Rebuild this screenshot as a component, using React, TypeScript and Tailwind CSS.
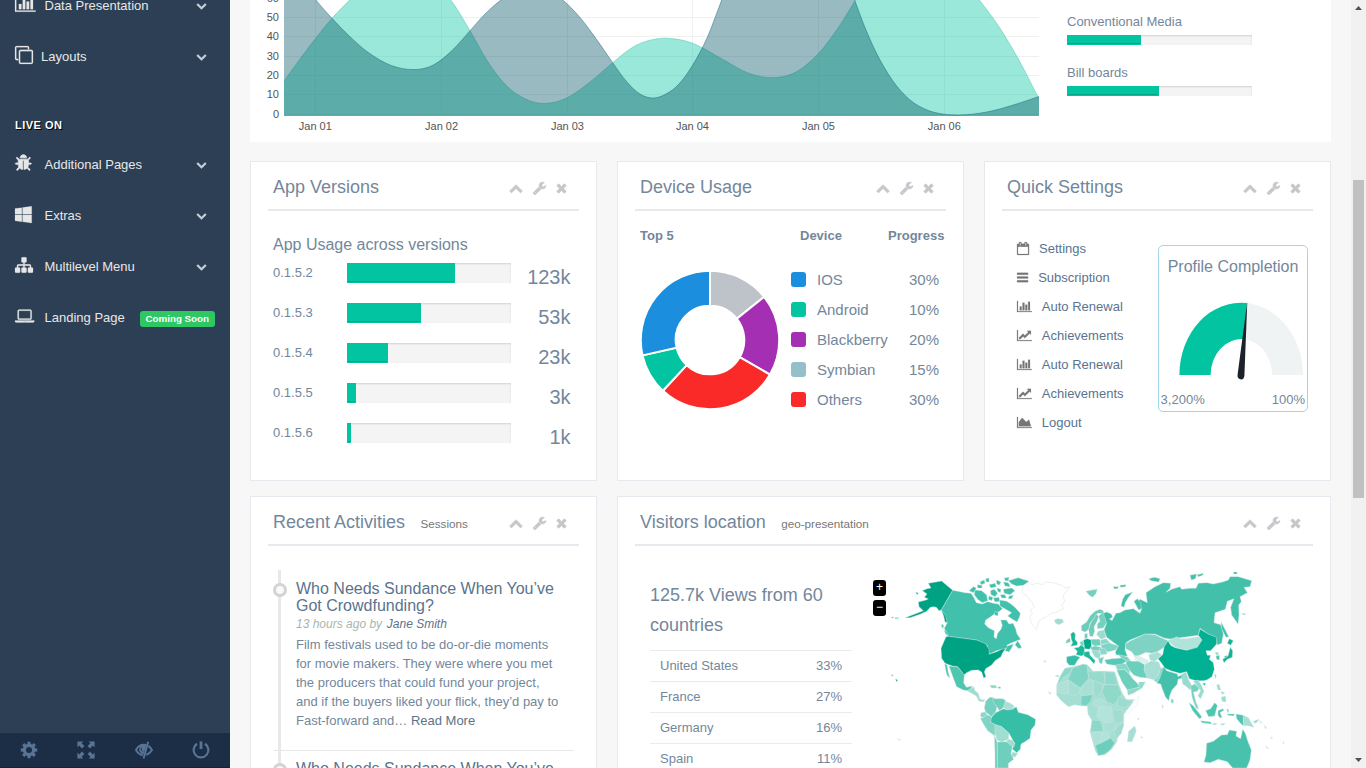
import React from "react";

const glyphs = {
  chevronDown:
    "M1683 808l-742 741q-19 19-45 19t-45-19l-742-741q-19-19-19-45.5t19-45.5l166-165q19-19 45-19t45 19l531 531 531-531q19-19 45-19t45 19l166 165q19 19 19 45.5t-19 45.5z",
  chevronUp:
    "M1683 1331l-166 165q-19 19-45 19t-45-19l-531-531-531 531q-19 19-45 19t-45-19l-166-165q-19-19-19-45.5t19-45.5l742-741q19-19 45-19t45 19l742 741q19 19 19 45.5t-19 45.5z",
  wrench:
    "M448 1472q0-26-19-45t-45-19-45 19-19 45 19 45 45 19 45-19 19-45zm644-420l-682 682q-37 37-90 37-52 0-91-37l-106-108q-38-36-38-90 0-53 38-91l681-681q39 98 114.5 173.5t173.5 114.5zm634-435q0 39-23 106-47 134-164.5 217.5t-258.5 83.5q-185 0-316.5-131.5t-131.5-316.5 131.5-316.5 316.5-131.5q58 0 121.5 16.5t107.5 46.5q16 11 16 28t-16 28l-293 169v224l193 107q5-3 79-48.5t135.5-81 70.5-35.5q15 0 23.5 10t8.5 25z",
  close:
    "M1490 1322q0 40-28 68l-136 136q-28 28-68 28t-68-28l-294-294-294 294q-28 28-68 28t-68-28l-136-136q-28-28-28-68t28-68l294-294-294-294q-28-28-28-68t28-68l136-136q28-28 68-28t68 28l294 294 294-294q28-28 68-28t68 28l136 136q28 28 28 68t-28 68l-294 294 294 294q28 28 28 68z",
  barChart:
    "M640 896v512h-256v-512h256zm384-512v1024h-256v-1024h256zm1024 1152v128h-2048v-1536h128v1408h1920zm-640-896v768h-256v-768h256zm384-384v1152h-256v-1152h256z",
  lineChart:
    "M2048 1536v128h-2048v-1536h128v1408h1920zm-128-1248v435q0 21-19.5 29.5t-35.5-7.5l-121-121-633 633q-10 10-23 10t-23-10l-233-233-416 416-192-192 585-585q10-10 23-10t23 10l233 233 464-464-121-121q-16-16-7.5-35.5t29.5-19.5h435q14 0 23 9t9 23z",
  areaChart:
    "M2048 1536v128h-2048v-1536h128v1408h1920zm-384-1024l256 896h-1664v-576l448-576 576 576z",
  calendar:
    "M192 1664h1408v-1024h-1408v1024zm384-1216v-288q0-14-9-23t-23-9h-64q-14 0-23 9t-9 23v288q0 14 9 23t23 9h64q14 0 23-9t9-23zm768 0v-288q0-14-9-23t-23-9h-64q-14 0-23 9t-9 23v288q0 14 9 23t23 9h64q14 0 23-9t9-23zm384-64v1280q0 52-38 90t-90 38h-1408q-52 0-90-38t-38-90v-1280q0-52 38-90t90-38h128v-96q0-66 47-113t113-47h64q66 0 113 47t47 113v96h384v-96q0-66 47-113t113-47h64q66 0 113 47t47 113v96h128q52 0 90 38t38 90z",
  bars: "M1664 1344v128q0 26-19 45t-45 19h-1408q-26 0-45-19t-19-45v-128q0-26 19-45t45-19h1408q26 0 45 19t19 45zm0-512v128q0 26-19 45t-45 19h-1408q-26 0-45-19t-19-45v-128q0-26 19-45t45-19h1408q26 0 45 19t19 45zm0-512v128q0 26-19 45t-45 19h-1408q-26 0-45-19t-19-45v-128q0-26 19-45t45-19h1408q26 0 45 19t19 45z",
  windows:
    "M746 1006v651l-682-94v-557h682zm0-743v659h-682v-565zm982 743v786l-907-125v-661h907zm0-878v794h-907v-669z",
  sitemap:
    "M1792 1248v320q0 40-28 68t-68 28h-320q-40 0-68-28t-28-68v-320q0-40 28-68t68-28h96v-192h-512v192h96q40 0 68 28t28 68v320q0 40-28 68t-68 28h-320q-40 0-68-28t-28-68v-320q0-40 28-68t68-28h96v-192h-512v192h96q40 0 68 28t28 68v320q0 40-28 68t-68 28h-320q-40 0-68-28t-28-68v-320q0-40 28-68t68-28h96v-192q0-52 38-90t90-38h512v-192h-96q-40 0-68-28t-28-68v-320q0-40 28-68t68-28h320q40 0 68 28t28 68v320q0 40-28 68t-68 28h-96v192h512q52 0 90 38t38 90v192h96q40 0 68 28t28 68z",
  laptop:
    "M416 1280q-66 0-113-47t-47-113v-704q0-66 47-113t113-47h1088q66 0 113 47t47 113v704q0 66-47 113t-113 47h-1088zm-32-864v704q0 13 9.5 22.5t22.5 9.5h1088q13 0 22.5-9.5t9.5-22.5v-704q0-13-9.5-22.5t-22.5-9.5h-1088q-13 0-22.5 9.5t-9.5 22.5zm1376 928h160v96q0 40-47 68t-113 28h-1600q-66 0-113-28t-47-68v-96h1760zm-720 96q16 0 16-16t-16-16h-160q-16 0-16 16t16 16h160z",
  clone:
    "M1664 1632v-1088q0-13-9.5-22.5t-22.5-9.5h-1088q-13 0-22.5 9.5t-9.5 22.5v1088q0 13 9.5 22.5t22.5 9.5h1088q13 0 22.5-9.5t9.5-22.5zm128-1088v1088q0 66-47 113t-113 47h-1088q-66 0-113-47t-47-113v-1088q0-66 47-113t113-47h1088q66 0 113 47t47 113zm-384-384v160h-128v-160q0-13-9.5-22.5t-22.5-9.5h-1088q-13 0-22.5 9.5t-9.5 22.5v1088q0 13 9.5 22.5t22.5 9.5h160v128h-160q-66 0-113-47t-47-113v-1088q0-66 47-113t113-47h1088q66 0 113 47t47 113z",
  bug: "M1696 960q0 26-19 45t-45 19h-224q0 171-67 290l208 209q19 19 19 45t-19 45q-18 19-45 19t-45-19l-198-197q-5 5-15 13t-42 28.5-65 36.5-82 29-97 13v-896h-128v896q-51 0-101.5-13.5t-87-33-66-39-43.5-32.5l-15-14-183 207q-20 21-48 21-24 0-43-16-19-18-20.5-44.5t15.5-46.5l202-227q-58-114-58-274h-224q-26 0-45-19t-19-45 19-45 45-19h224v-294l-173-173q-19-19-19-45t19-45 45-19 45 19l173 173h844l173-173q19-19 45-19t45 19 19 45-19 45l-173 173v294h224q26 0 45 19t19 45zm-480-576h-640q0-133 93.5-226.5t226.5-93.5 226.5 93.5 93.5 226.5z",
};

type GlyphName = keyof typeof glyphs;

/* x offset and advance width of each glyph on its 1792-unit em */
const metrics: Record<GlyphName, [number, number]> = {
  chevronDown: [0, 1792],
  chevronUp: [0, 1792],
  wrench: [64, 1664],
  close: [192, 1408],
  barChart: [0, 2048],
  lineChart: [0, 2048],
  areaChart: [0, 2048],
  calendar: [64, 1664],
  bars: [128, 1536],
  windows: [64, 1664],
  sitemap: [0, 1792],
  laptop: [0, 1920],
  clone: [0, 1792],
  bug: [64, 1664],
};

function Glyph({ name, size, weight = 0, className = "" }: { name: GlyphName; size: number; weight?: number; className?: string }) {
  const [x, w] = metrics[name];
  return (
    <svg
      className={"shrink-0 fill-current stroke-current overflow-visible " + className}
      width={(w / 1792) * size}
      height={size}
      viewBox={`${x} 0 ${w} 1792`}
      strokeWidth={weight}
    >
      <path d={glyphs[name]} />
    </svg>
  );
}

/* ---------- sidebar ---------- */

function NavRow({ icon, label, badge, iconBox = "w-[29.5px]" }: { icon: GlyphName; label: string; badge?: string; iconBox?: string }) {
  return (
    <div className="flex h-[51px] items-center pl-[15px] pr-[23px]">
      <span className={"flex shrink-0 -translate-y-[2px] " + iconBox}>
        <Glyph name={icon} size={18} weight={icon === "bug" ? 70 : 20} />
      </span>
      <span>{label}</span>
      {badge ? (
        <span className="ml-[15px] mt-[3px] h-4 w-[75px] shrink-0 -mr-[20px] rounded-[3px] bg-[#2dc764] text-center text-[9.75px] leading-4 font-bold text-white">
          {badge}
        </span>
      ) : (
        <Glyph name="chevronDown" size={11} className="ml-auto -mt-px text-[#c4cfda]" />
      )}
    </div>
  );
}

function FooterIcon({ children }: { children: React.ReactNode }) {
  return (
    <span className="flex flex-1 justify-center">
      <svg width="18" height="18" viewBox="0 0 18 18" className="fill-current stroke-current">
        {children}
      </svg>
    </span>
  );
}

function Sidebar() {
  return (
    <aside className="flex h-full w-[230px] shrink-0 flex-col overflow-hidden bg-[#2d3f54] text-[13px] text-[#e7e7e7]">
      <nav className="-mt-5 flex-1">
        <NavRow icon="barChart" label="Data Presentation" />
        <NavRow icon="clone" label="Layouts" iconBox="w-[26px]" />
        <h3 className="h-[57px] pt-[35px] pl-[15px] text-[11px] leading-4 font-bold tracking-[0.5px] text-white uppercase [text-shadow:1px_1px_#000]">
          Live On
        </h3>
        <NavRow icon="bug" label="Additional Pages" />
        <NavRow icon="windows" label="Extras" />
        <NavRow icon="sitemap" label="Multilevel Menu" />
        <NavRow icon="laptop" label="Landing Page" badge="Coming Soon" />
      </nav>
      <div className="flex h-[35px] items-center border-b border-[#14233a] bg-[#1c2e46] text-[#5a7496]">
        <FooterIcon>
          <circle cx="9" cy="9" r="4.6" fill="none" strokeWidth="3.2" />
          {[0, 45, 90, 135, 180, 225, 270, 315].map((a) => (
            <rect key={a} x="7.4" y="0.8" width="3.2" height="3" stroke="none" transform={`rotate(${a} 9 9)`} />
          ))}
        </FooterIcon>
        <FooterIcon>
          {[0, 90, 180, 270].map((a) => (
            <path
              key={a}
              stroke="none"
              transform={`rotate(${a} 9 9)`}
              d="M0.4 0.4H6.4L4.6 2.2L7.4 5L5 7.4L2.2 4.6L0.4 6.4Z"
            />
          ))}
        </FooterIcon>
        <FooterIcon>
          <path fill="none" strokeWidth="1.9" d="M11.5 4.1Q4.2 2.6 1 9Q3.4 13.4 7.8 14.2" />
          <path stroke="none" d="M5 5Q8 3.4 11.4 4.4L8.4 13.4Q4 11.8 4.2 8.2Z" />
          <path fill="none" strokeWidth="1.9" d="M13.4 4.9Q15.6 6.4 17 9Q14.9 12.6 11.2 13.8" />
          <path fill="none" strokeWidth="1.9" d="M13.2 0.8L8.6 17.4" />
          <path fill="none" stroke="#1c2e46" strokeWidth="0.9" d="M6.2 6.6Q5.6 9.4 7.9 10.6" />
        </FooterIcon>
        <FooterIcon>
          <path fill="none" strokeWidth="2.2" d="M5 2.8A7.4 7.4 0 1 0 13 2.8" />
          <path fill="none" strokeWidth="2.8" d="M9 0.4V8" />
        </FooterIcon>
      </div>
    </aside>
  );
}

/* ---------- area chart ---------- */

type Pt = [number, number];

/* cubic Hermite curve through the points, slopes by central difference */
function spline(pts: Pt[]) {
  const last = pts.length - 1;
  const slope = (i: number) => {
    const a = pts[Math.max(i - 1, 0)];
    const b = pts[Math.min(i + 1, last)];
    return (b[1] - a[1]) / (b[0] - a[0]);
  };
  let d = `M${pts[0][0]} ${pts[0][1]}`;
  for (let i = 0; i < last; i++) {
    const [x0, y0] = pts[i];
    const [x1, y1] = pts[i + 1];
    const h = (x1 - x0) / 3;
    d += `C${x0 + h} ${y0 + slope(i) * h} ${x1 - h} ${y1 - slope(i + 1) * h} ${x1} ${y1}`;
  }
  return d;
}

const seriesA: Pt[] = [
  [284, 81], [300, 59], [315.5, 38.5], [332, 18.3], [352, -2], [375, -20], [402, -28], [430, -20], [450, -1], [470, 30.7],
  [488, 62], [506.7, 86], [526.7, 99.6], [545, 103.5], [566.7, 98], [590, 82], [612.7, 62.7], [633, 47],
  [650, 40.2], [668, 38.3], [692.7, 43.2], [723, 59.5], [748, 73], [773, 77.7], [796, 72], [818.7, 53.3],
  [838, 28], [855, 1], [875, -30], [915, -60], [950, -35], [979.3, 0], [1000, 28.3], [1020, 62], [1039, 99],
];

const seriesB: Pt[] = [
  [284, -50], [300, -22], [316, 0], [332, 18.3], [350, 36.7], [369, 53], [391, 65.4], [414, 69.6], [433, 65.2],
  [452, 50.6], [470, 30.7], [485, 14], [501, 0], [516, -9], [532, -13], [548, -9], [562.7, 0], [580, 17.5], [597, 40],
  [612.7, 62.7], [626.7, 81.7], [640, 94], [653.3, 98], [666, 94], [679, 84], [692.7, 65],
  [707, 38], [721.7, 0], [745, -60], [790, -110], [830, -65], [855, 1], [866, 30], [880, 60], [896.7, 86],
  [914, 103], [934, 112.3], [958, 115], [986.7, 112], [1013.3, 105], [1039, 96.5],
];

const close = (d: string) => d + "L1039 116L284 116Z";

const dayX = [315.3, 441.6, 567.4, 692.4, 818.4, 944.3];

function AreaChart() {
  return (
    <svg width="817" height="142" viewBox="250 0 817 142" className="shrink-0">
      <g stroke="#f0f0f0">
        {[17.5, 36.5, 56.5, 75.5, 94.5, 114.5].map((y) => (
          <path key={y} d={`M284 ${y}H1039`} />
        ))}
        {[315.5, 441.5, 567.5, 692.5, 818.5, 944.5].map((x) => (
          <path key={x} d={`M${x} 0V115`} />
        ))}
      </g>
      <path d={close(spline(seriesA))} fill="rgba(3,198,160,0.4)" />
      <path d={spline(seriesA)} fill="none" stroke="rgba(38,185,154,0.38)" strokeWidth="1" />
      <path d={close(spline(seriesB))} fill="rgba(0,82,100,0.4)" />
      <path d={spline(seriesB)} fill="none" stroke="rgba(3,88,106,0.4)" strokeWidth="1" />
      <g fill="#545454" fontSize="11" textAnchor="end">
        {[60, 50, 40, 30, 20, 10, 0].map((v, i) => (
          <text key={v} x="279" y={Math.floor(2 + i * 19.35)}>
            {v}
          </text>
        ))}
      </g>
      <g fill="#545454" fontSize="11" textAnchor="middle">
        {["Jan 01", "Jan 02", "Jan 03", "Jan 04", "Jan 05", "Jan 06"].map((t, i) => (
          <text key={t} x={dayX[i]} y="130">
            {t}
          </text>
        ))}
      </g>
    </svg>
  );
}

function Progress({ value, className }: { value: number; className: string }) {
  return (
    <div className={"bg-[#f4f4f4] shadow-[inset_0_1px_2px_rgba(0,0,0,0.14)] " + className}>
      <div
        className="h-full border border-[#03c4a1] bg-[#03c4a1] shadow-[inset_0_-1px_0_rgba(0,0,0,0.15)]"
        style={{ width: `${value}%` }}
      />
    </div>
  );
}

/* ---------- panel ---------- */

function Panel({ title, note, className, children }: { title: string; note?: string; className: string; children: React.ReactNode }) {
  return (
    <section className={"shrink-0 border border-[#e6e9ed] bg-white px-[17px] " + className}>
      <header className="flex h-[49px] items-start border-b-2 border-[#e6e9ed] pl-[5px]">
        <h2 className="pt-[14px] text-[18px] leading-[22px]">
          {title}
          {note && <small className="ml-[15.4px] text-[11.7px] text-[#777]">{note}</small>}
        </h2>
        <div className="mt-[19px] mr-[12px] ml-auto flex text-[#c5c7cb]">
          <Glyph name="chevronUp" size={14} weight={60} />
          <Glyph name="wrench" size={14} weight={60} className="ml-[10px]" />
          <Glyph name="close" size={14} weight={60} className="ml-[10px]" />
        </div>
      </header>
      {children}
    </section>
  );
}

const versions = [
  { name: "0.1.5.2", pct: 66, count: "123k" },
  { name: "0.1.5.3", pct: 45, count: "53k" },
  { name: "0.1.5.4", pct: 25, count: "23k" },
  { name: "0.1.5.5", pct: 5.5, count: "3k" },
  { name: "0.1.5.6", pct: 2.5, count: "1k" },
];

function AppVersions() {
  return (
    <Panel title="App Versions" className="h-[320px] w-[347px]">
      <div className="pt-[23px] pl-[5px]">
        <h4 className="mb-[7px] text-[16px] leading-[22px]">App Usage across versions</h4>
        {versions.map((v) => (
          <div key={v.name} className="flex h-10 items-start">
            <span className="w-[74px] leading-5">{v.name}</span>
            <Progress value={v.pct} className="h-5 w-[164px]" />
            <span className="w-[59.5px] pt-[2px] text-right text-[20px] leading-6">{v.count}</span>
          </div>
        ))}
      </div>
    </Panel>
  );
}

const slices = [
  { v: 15, color: "#bdc3c9" },
  { v: 20, color: "#a52fb2" },
  { v: 30, color: "#f92a28" },
  { v: 10, color: "#03c4a1" },
  { v: 30, color: "#1b8fde" },
];

function Donut() {
  const R = 69.2;
  const r = 34.3;
  const at = (rad: number, t: number) => `${70 + rad * Math.sin(t)} ${70 - rad * Math.cos(t)}`;
  let sum = 0;
  return (
    <svg width="140" height="140" viewBox="0 0 140 140" className="mt-[27px] shrink-0">
      {slices.map((s, i) => {
        const a = (sum / 105) * Math.PI * 2;
        sum += s.v;
        const b = (sum / 105) * Math.PI * 2;
        return (
          <path
            key={i}
            fill={s.color}
            stroke="#fff"
            strokeWidth="2"
            d={`M${at(R, a)}A${R} ${R} 0 0 1 ${at(R, b)}L${at(r, b)}A${r} ${r} 0 0 0 ${at(r, a)}Z`}
          />
        );
      })}
    </svg>
  );
}

const devices = [
  { name: "IOS", pct: "30%", box: "bg-[#1b8fde]" },
  { name: "Android", pct: "10%", box: "bg-[#03c4a1]" },
  { name: "Blackberry", pct: "20%", box: "bg-[#a52fb2]" },
  { name: "Symbian", pct: "15%", box: "bg-[#95c0ca]" },
  { name: "Others", pct: "30%", box: "bg-[#f92a28]" },
];

function DeviceUsage() {
  return (
    <Panel title="Device Usage" className="h-[320px] w-[347px]">
      <div className="flex pt-[15px] pl-[5px] leading-[19px] font-bold">
        <span className="w-[160px]">Top 5</span>
        <span className="w-[88px]">Device</span>
        <span>Progress</span>
      </div>
      <div className="-mt-[2px] flex pl-[5px]">
        <Donut />
        <ul className="mt-[22px] ml-[11px] text-[15px]">
          {devices.map((d) => (
            <li key={d.name} className="flex h-[30px] items-center">
              <i className={"mr-[11px] -mt-px h-[15px] w-[15px] rounded-[3px] " + d.box} />
              <span className="w-[92px]">{d.name}</span>
              <span>{d.pct}</span>
            </li>
          ))}
        </ul>
      </div>
    </Panel>
  );
}

const quick: { icon: GlyphName; label: string }[] = [
  { icon: "calendar", label: "Settings" },
  { icon: "bars", label: "Subscription" },
  { icon: "barChart", label: "Auto Renewal" },
  { icon: "lineChart", label: "Achievements" },
  { icon: "barChart", label: "Auto Renewal" },
  { icon: "lineChart", label: "Achievements" },
  { icon: "areaChart", label: "Logout" },
];

function QuickSettings() {
  return (
    <Panel title="Quick Settings" className="h-[320px] w-[347px]">
      <div className="flex">
        <ul className="w-[156px] pt-[23px] pl-[15px]">
          {quick.map((q, i) => (
            <li key={i} className="flex h-[29px] items-center gap-[10px] text-[#5a738e]">
              <Glyph name={q.icon} size={13} weight={30} className="text-[#757679]" />
              {q.label}
            </li>
          ))}
        </ul>
        <div className="mt-[34px] flex h-[167px] w-[150px] flex-col rounded-[5px] border border-[#a0d8e8]">
          <h4 className="pt-[10px] text-center text-[16px] leading-[22px]">Profile Completion</h4>
          <svg width="148" height="112" viewBox="1159 278 148 112" className="shrink-0">
            <path fill="#f0f3f3" d="M1179.4 375A61.8 72.3 0 0 1 1303 375H1272A30.7 36 0 0 0 1210.6 375Z" />
            <path fill="#03c4a1" d="M1179.4 375A61.8 72.3 0 0 1 1247 303L1244.2 339.2A30.7 36 0 0 0 1210.6 375Z" />
            <path fill="#1d212a" d="M1247.3 301.5L1237.6 374.5A3.4 4.2 0 0 0 1244.4 375.8Z" />
          </svg>
          <div className="flex justify-between pr-[2px] pl-[1.6px] leading-[19px]">
            <span>3,200%</span>
            <span>100%</span>
          </div>
        </div>
      </div>
    </Panel>
  );
}

function Activity() {
  return (
    <li className="relative h-[180px] border-t border-[#e8e8e8] pl-[23px] first:border-transparent">
      <i className="absolute -top-px left-[5px] h-[180px] w-[3px] bg-[#e8e8e8]" />
      <i className="absolute top-[12px] left-0 h-[14px] w-[14px] rounded-full border-[3px] border-[#d2d3d2] bg-[#f9f9f9]" />
      <h2 className="pt-[9px] text-[16px] leading-[17px] whitespace-nowrap text-[#5a738e]">
        Who Needs Sundance When You’ve
        <br />
        Got Crowdfunding?
      </h2>
      <p className="pt-[1px] text-[12px] leading-[18px] text-[#aab6aa] italic">
        13 hours ago by <a className="ml-[1.4px] text-[#5a738e]">Jane Smith</a>
      </p>
      <p className="pt-[2px] leading-[19px] whitespace-nowrap">
        Film festivals used to be do-or-die moments
        <br />
        for movie makers. They were where you met
        <br />
        the producers that could fund your project,
        <br />
        and if the buyers liked your flick, they’d pay to
        <br />
        Fast-forward and… <a className="text-[#5a738e]">Read More</a>
      </p>
    </li>
  );
}

/* ---------- world map ---------- */

const americas: [string, string][] = [
  ["#00a284", "190,70 230,63 263,91 229,150 222,152 214,142 206,140 196,142 185,154 165,163 135,173 120,173 150,162 175,152 162,140 160,126 180,121 190,117 178,112 186,102 172,92 186,86 198,84"],
  ["#00a284", "229,150 240,160 247,172 246,188 240,186 236,168"],
  ["#41c1ab", "263,91 300,98 318,100 326,112 334,128 352,132 368,125 385,130 400,132 412,146 404,154 390,160 380,168 362,180 359,192 370,203 388,212 387,232 394,236 398,220 408,208 412,196 407,180 424,180 432,192 444,190 452,206 456,222 467,238 440,248 425,256 430,260 422,266 410,268 395,272 372,283 366,255 335,240 250,229 238,205 247,188 242,168 229,150"],
  ["#41c1ab", "404,120 425,124 438,132 452,144 466,160 463,172 456,186 440,176 428,168 440,158 422,148 405,138"],
  ["#41c1ab", "330,90 350,92 365,105 368,122 352,128 338,118 328,104"],
  ["#41c1ab", "312,92 325,80 334,84 326,98"],
  ["#41c1ab", "430,62 460,53 492,64 475,76 455,78 440,72"],
  ["#41c1ab", "415,88 440,84 450,92 435,104 418,100"],
  ["#41c1ab", "345,65 358,60 360,70 348,74"],
  ["#41c1ab", "362,56 372,54 372,66 364,66"],
  ["#41c1ab", "372,74 390,70 394,80 378,84"],
  ["#41c1ab", "395,60 408,66 402,76 394,70"],
  ["#41c1ab", "376,92 388,88 398,100 390,110 378,104"],
  ["#41c1ab", "396,84 408,88 406,98 398,94"],
  ["#41c1ab", "372,108 384,112 380,122 370,118"],
  ["#41c1ab", "385,114 402,112 404,124 390,126"],
  ["#41c1ab", "415,66 430,68 436,80 420,78"],
  ["#41c1ab", "418,54 432,52 430,62 420,62"],
  ["#41c1ab", "406,104 420,104 424,114 410,114"],
  ["#41c1ab", "337,74 350,76 352,84 338,84"],
  ["#41c1ab", "432,108 445,106 440,116 430,116"],
  ["#41c1ab", "390,154 400,158 398,168 388,164"],
  ["#41c1ab", "428,258 445,252 440,264 432,276 420,272"],
  ["#41c1ab", "450,255 458,242 470,262 462,266"],
  ["#41c1ab", "230,192 236,196 234,206 230,200"],
  ["#41c1ab", "237,210 246,216 250,228 242,222"],
  ["#00a284", "243,230 250,229 335,240 362,251 372,268 372,283 395,275 410,268 422,265 412,280 408,290 390,302 380,315 362,326 358,336 363,350 356,354 350,336 340,330 320,331 305,338 296,346 290,335 278,320 262,318 240,310 230,295 228,265"],
  ["#4fc6b0", "252,318 278,321 290,335 298,346 296,368 304,382 322,378 316,388 308,392 295,390 275,380 264,352"],
  ["#4fc6b0", "239,312 246,314 250,338 255,354 246,346 242,330"],
  ["#a0ddd0", "306,392 326,380 330,392 340,400 344,416 352,420 360,418 356,425 342,424 334,408 320,400"],
  ["#74d0bf", "362,424 374,412 382,412 388,430 396,440 392,456 380,470 362,456 358,444"],
  ["#6fcfbd", "382,412 390,416 414,416 422,422 418,440 404,452 396,440 386,428"],
  ["#a8e0d5", "420,424 436,430 448,438 442,448 424,450 416,442"],
  ["#36bfa6", "392,458 404,452 416,446 426,450 442,448 454,440 460,457 488,464 512,478 510,495 498,510 495,535 480,545 468,552 466,568 455,578 442,567 449,550 440,534 432,520 410,500 390,494 376,486 378,474"],
  ["#8bd7ca", "348,458 362,456 366,464 354,474 346,468"],
  ["#80d4c5", "354,474 366,464 380,470 376,486 390,494 390,528 368,512 354,490 346,474"],
  ["#a0ded0", "390,494 410,500 432,520 430,538 410,546 396,540 390,520"],
  ["#a0ded0", "430,538 442,540 450,550 446,562 434,556 424,544"],
  ["#72cfbe", "388,526 396,545 398,624 390,624 390,580"],
  ["#6fcfbd", "397,546 424,545 442,560 438,580 446,598 430,610 430,624 398,624"],
  ["#9adccf", "442,576 458,580 450,592 440,588"],
  ["#8bd7ca", "374,376 392,376 396,384 380,384"],
  ["#5bcab6", "400,380 407,381 406,386 399,384"],
  ["#00a284", "92,356 98,361 94,366"],
  ["#00a284", "78,343 85,347 82,349"],
  ["#4fc6b0", "80,170 86,172 84,175 80,174"],
  ["#4fc6b0", "90,173 100,173 100,176 90,176"],
  ["#00a284", "152,96 160,100 156,104"],
  ["#9edccf", "568,180 578,176 592,178 596,186 582,194 572,190"],
  ["#bfe6de", "550,395 558,398 556,404"],
  ["#7fd3c4", "536,302 543,304 540,307"],
  ["#7fd3c4", "570,347 582,346 580,351"],
  ["#bfe6de", "97,536 108,540 102,540"],
];

const oldWorld: [string, string][] = [
  ["#18b796", "92,222 100,215 106,222 105,238 113,248 111,256 92,259 98,248 94,238"],
  ["#6fd0bd", "80,240 90,234 91,246 77,250"],
  ["#6ccdba", "124,197 140,186 150,168 165,154 180,148 190,152 190,160 172,160 160,178 150,190 146,208 136,216 125,212"],
  ["#6ccdba", "152,190 160,178 170,162 176,170 170,186 162,200 164,214 158,230 149,228 146,208"],
  ["#74d0bf", "176,168 190,156 196,172 200,188 190,204 172,206 172,192 180,184"],
  ["#42c0aa", "195,175 190,160 200,156 214,162 218,172 208,176 216,182 228,160 240,158 255,150 280,146 300,160 305,146 290,128 300,118 322,128 318,98 345,80 370,68 392,70 390,85 378,97 395,88 420,80 425,88 450,85 468,85 475,70 500,68 520,72 548,66 565,60 570,50 595,50 635,62 630,80 612,82 622,98 600,110 604,125 596,135 597,165 594,192 575,165 572,142 582,116 562,124 556,148 525,158 522,188 542,194 550,222 545,250 532,255 528,232 505,222 480,205 475,226 430,232 390,237 372,234 345,222 315,222 295,230 270,240 258,248 255,270 262,288 248,288 228,284 226,276 235,258 214,242 200,232 192,210 200,190"],
  ["#7fd3c4", "256,252 272,242 295,232 315,222 345,224 370,236 384,242 378,256 366,266 352,275 335,280 318,277 300,285 285,290 276,276 258,266"],
  ["#b0e3da", "384,242 402,234 410,230 420,236 440,236 475,230 486,240 472,262 440,270 405,262"],
  ["#02b194", "384,242 392,256 405,263 440,271 472,262 486,240 475,226 480,207 505,222 530,232 530,252 512,272 498,272 502,286 512,286 508,298 520,308 523,328 516,350 500,360 490,362 468,362 448,356 440,335 420,340 395,333 375,325 365,310 354,296 368,284 372,262"],
  ["#45c1ab", "358,328 372,322 380,332 412,342 414,350 436,338 432,352 414,358 412,372 396,390 390,404 386,422 376,410 366,384 362,372 350,370 360,352"],
  ["#a5dfd5", "316,312 335,302 356,306 362,322 354,352 345,360 322,354 312,330"],
  ["#8ed8cb", "346,358 354,350 362,326 370,324 360,352 352,368 340,360"],
  ["#6bcfbd", "260,300 276,304 296,304 314,314 312,330 322,354 300,352 282,346 268,330 258,312"],
  ["#6fcfbd", "230,330 252,328 268,342 278,356 292,370 300,380 282,386 262,390 246,366"],
  ["#90d9cc", "262,390 298,382 296,366 316,366 306,384 280,400 264,406"],
  ["#8bd7ca", "226,316 246,310 258,312 268,330 270,342 252,328 232,330"],
  ["#58c9b5", "194,300 215,296 245,294 262,302 246,312 222,316 200,312"],
  ["#7fd3c4", "236,284 262,290 272,302 258,302 244,294"],
  ["#d8f1ec", "284,286 300,290 326,302 318,312 300,304 286,300"],
  ["#a8e0d5", "326,284 352,276 366,284 354,296 345,304 330,300"],
  ["#19b99a", "102,264 116,262 124,254 134,264 132,284 124,288 108,284 112,274"],
  ["#00a98a", "130,240 142,236 154,240 154,262 148,268 134,266"],
  ["#74d0bf", "120,246 130,242 132,258 122,254"],
  ["#36bfa6", "80,290 104,286 120,292 112,302 104,316 88,316 80,306"],
  ["#19b99a", "132,276 148,274 150,286 166,302 162,312 148,296 132,288"],
  ["#6fd0be", "154,238 180,238 182,256 164,258 154,252"],
  ["#80d4c6", "182,256 206,248 236,258 226,270 204,276 188,268"],
  ["#8bd7ca", "182,240 198,236 210,248 200,250 182,254"],
  ["#74d0bf", "150,262 166,258 184,262 180,272 158,272"],
  ["#8bd7ca", "178,264 196,266 202,282 182,284"],
  ["#9adccf", "154,272 176,272 182,284 178,298 164,290"],
  ["#6fd0be", "176,296 192,290 188,300 186,312 178,308"],
  ["#9adccf", "174,214 192,210 198,232 184,238 170,224"],
  ["#6ccdba", "134,222 142,220 142,234 134,236"],
  ["#a5ded3", "75,325 92,322 128,313 142,314 160,334 190,333 224,335 230,352 238,378 248,402 260,420 282,418 272,440 252,462 250,500 236,520 230,546 215,568 195,584 175,587 166,572 158,545 150,515 156,482 144,462 142,438 125,438 104,434 85,440 62,420 50,405 50,375 60,350"],
  ["#8ed8cb", "75,325 98,322 90,340 72,350 52,374 60,350"],
  ["#80d4c5", "98,324 130,313 140,315 146,355 120,384 84,358"],
  ["#97dbce", "144,332 160,336 176,334 192,336 196,374 180,370 146,356"],
  ["#90d9cc", "194,335 224,337 232,374 196,374"],
  ["#8fd9cb", "192,374 234,375 246,402 234,420 220,434 200,424 186,396"],
  ["#aee2d8", "52,374 84,360 92,398 76,402 54,398"],
  ["#a5dfd4", "84,360 120,384 118,400 98,408 86,404"],
  ["#a9e0d6", "122,384 150,358 160,362 164,386 156,404 124,408"],
  ["#9edccf", "160,362 190,374 184,398 166,414 160,392"],
  ["#7ad2c2", "124,408 158,404 152,424 138,438 122,434"],
  ["#aee2d8", "160,424 184,414 200,430 186,440 162,440"],
  ["#9bdccf", "234,410 258,418 276,424 256,444 232,438"],
  ["#b2e4da", "174,442 214,438 218,484 192,488 170,470"],
  ["#a0ddd1", "220,446 248,452 250,484 230,492 218,470"],
  ["#8ed8cb", "156,480 182,482 190,514 152,516"],
  ["#a9e0d6", "190,490 218,486 232,500 210,518 192,514"],
  ["#9edccf", "236,494 252,490 244,520 228,538 224,514"],
  ["#aee2d8", "152,516 186,516 182,548 164,556"],
  ["#b0e3da", "186,518 208,520 208,536 184,546"],
  ["#6ccebc", "166,556 186,548 212,534 224,550 208,572 190,584 174,586"],
  ["#ffffff", "256,456 282,424 298,408 290,434 262,462"],
  ["#a5dfd5", "266,514 284,498 289,512 276,545 262,545"],
  ["#98dbcf", "424,346 438,336 446,360 456,378 450,390 440,380 428,372"],
  ["#74d0bf", "452,378 464,372 478,384 472,394 460,396 466,420 472,440 462,430 456,410"],
  ["#98dbcf", "460,364 474,360 484,376 492,394 482,416 474,408 482,392 470,376"],
  ["#4fc6b0", "447,428 458,436 474,455 486,472 478,476 458,452"],
  ["#74d0bf", "462,428 470,432 476,448 468,444"],
  ["#4fc6b0", "482,482 512,486 515,492 486,488"],
  ["#4fc6b0", "497,452 512,446 524,428 532,436 524,468 506,470"],
  ["#4fc6b0", "534,452 548,446 552,450 540,458 546,472 540,474 534,466"],
  ["#4fc6b0", "560,446 566,450 564,460"],
  ["#4fc6b0", "562,462 584,462 580,468 564,466"],
  ["#4fc6b0", "588,462 600,464 610,466 610,498 600,488 590,476"],
  ["#a5dfd5", "610,466 626,474 632,486 642,502 628,498 610,496"],
  ["#98dbcf", "530,374 538,374 542,390 534,390"],
  ["#98dbcf", "544,412 556,408 558,426 546,424"],
  ["#98dbcf", "542,394 554,398 548,404"],
  ["#12b395", "571,262 578,272 577,292 562,298 552,308 548,298 564,288"],
  ["#12b395", "562,250 568,236 580,242 572,256"],
  ["#12b395", "552,290 562,286 558,294"],
  ["#42c0aa", "543,186 556,210 566,230 558,232 545,206"],
  ["#98dbcf", "526,276 536,278 534,286 528,284"],
  ["#45c1ab", "528,288 538,286 538,300 530,298"],
  ["#02b194", "488,370 497,370 494,377"],
  ["#74d0bf", "524,342 529,346 526,356"],
  ["#80d4c5", "394,416 401,420 399,430 393,428"],
  ["#48c2ad", "500,550 520,544 545,525 562,524 568,510 590,514 588,528 602,536 608,508 616,520 624,545 634,570 630,600 620,624 578,624 562,605 535,598 510,608 492,606 498,585"],
  ["#42c0aa", "243,138 248,118 256,104 278,96 264,114 256,128 252,142"],
  ["#42c0aa", "282,124 292,116 302,128 304,146 296,150"],
  ["#74d0bf", "138,94 156,90 172,88 168,100 158,112 148,106"],
  ["#42c0aa", "220,80 236,80 232,86 222,86"],
  ["#42c0aa", "240,76 258,74 256,80 242,82"],
  ["#42c0aa", "326,56 344,52 360,56 356,66 334,62"],
  ["#42c0aa", "450,46 470,42 466,56 454,60"],
  ["#42c0aa", "472,44 490,40 488,46 474,50"],
  ["#42c0aa", "580,36 592,36 590,42 582,42"],
  ["#74d0bf", "604,160 618,162 612,165"],
  ["#98dbcf", "520,490 530,490 528,494 518,494"],
  ["#98dbcf", "540,492 556,490 548,496"],
  ["#98dbcf", "640,484 656,478 652,486 644,490"],
  ["#98dbcf", "366,434 370,438 368,446"],
  ["#98dbcf", "292,476 296,474 296,480"],
  ["#98dbcf", "302,530 308,532 304,534"],
  ["#bfe6de", "658,480 666,490 662,490"],
  ["#bfe6de", "672,494 680,504 676,506"],
  ["#bfe6de", "676,556 686,566 682,566"],
  ["#bfe6de", "692,530 698,534 694,536"],
  ["#98dbcf", "728,546 732,548 730,552"],
];

function WorldMap() {
  return (
    <svg width="430" height="208" viewBox="0 0 1290 624" className="shrink-0">
      <g stroke="#cfe6e0" strokeWidth="1.2" strokeLinejoin="round">
        <polygon
          fill="#fff"
          stroke="#e3e5e5"
          strokeWidth="2"
          points="466,72 490,66 500,74 515,70 532,74 542,66 565,68 590,76 600,84 614,80 600,100 594,108 600,124 590,136 596,146 575,156 560,160 540,172 522,182 514,208 502,196 494,174 502,160 496,150 508,140 500,126 486,108 470,96 474,84"
        />
        {americas.map(([fill, points], i) => (
          <polygon key={i} fill={fill} points={points} />
        ))}
        <g transform="translate(525 0)">
          {oldWorld.map(([fill, points], i) => (
            <polygon key={i} fill={fill} points={points} />
          ))}
        </g>
      </g>
    </svg>
  );
}

const visits = [
  ["United States", "33%"],
  ["France", "27%"],
  ["Germany", "16%"],
  ["Spain", "11%"],
];

function VisitorsLocation() {
  return (
    <Panel title="Visitors location" note="geo-presentation" className="h-[400px] w-[714px]">
      <div className="flex pl-[15px]">
        <div className="w-[202px] shrink-0 pt-[34px]">
          <h2 className="mb-[10px] text-[18px] leading-[30px]">125.7k Views from 60 countries</h2>
          {visits.map(([country, pct]) => (
            <div key={country} className="flex h-[31px] items-center justify-between border-t border-[#e9ebed] px-[10px]">
              <span>{country}</span>
              <span>{pct}</span>
            </div>
          ))}
        </div>
        <div className="relative ml-[13px] pt-[14px]">
          <WorldMap />
          <div className="absolute top-[34px] left-[8px] flex flex-col gap-1 text-center text-[12px] leading-[14px] text-white">
            <span className="h-4 w-[13px] rounded-[3px] bg-black">+</span>
            <span className="h-4 w-[13px] rounded-[3px] bg-black">−</span>
          </div>
        </div>
      </div>
    </Panel>
  );
}

export default function App() {
  return (
    <div className="flex h-[768px] w-[1366px] overflow-hidden bg-[#f7f7f7] font-['Liberation_Sans',Arial,sans-serif] text-[13px] leading-[1.47] text-[#73879c]">
      <Sidebar />
      <main className="ml-5 flex h-full w-[1081px] shrink-0 flex-col">
        <div className="flex h-[142px] shrink-0 bg-white">
          <AreaChart />
          <div className="w-[185px] pt-[12px]">
            <p className="h-[23px] leading-[19px]">Conventional Media</p>
            <Progress value={40} className="h-[10px]" />
            <p className="mt-[18px] h-[23px] leading-[19px]">Bill boards</p>
            <Progress value={49.7} className="h-[10px]" />
          </div>
        </div>
        <div className="mt-[19px] flex gap-5">
          <AppVersions />
          <DeviceUsage />
          <QuickSettings />
        </div>
        <div className="mt-[15px] flex gap-5">
          <Panel title="Recent Activities" note="Sessions" className="h-[400px] w-[347px]">
            <ul className="mr-[5px] ml-[5px] pt-[24px]">
              <Activity />
              <Activity />
            </ul>
          </Panel>
          <VisitorsLocation />
        </div>
      </main>
      <div className="ml-5 flex h-full w-[15px] shrink-0 flex-col items-center bg-[#f1f1f1]">
        <svg width="15" height="180" viewBox="0 0 15 180" className="shrink-0">
          <path d="M4 10L7.5 6L11 10Z" fill="#505050" />
        </svg>
        <div className="h-[318px] w-[11px] shrink-0 bg-[#c1c1c1]" />
        <svg width="15" height="270" viewBox="0 498 15 270" className="shrink-0">
          <path d="M4 758L7.5 762L11 758Z" fill="#505050" />
        </svg>
      </div>
    </div>
  );
}
